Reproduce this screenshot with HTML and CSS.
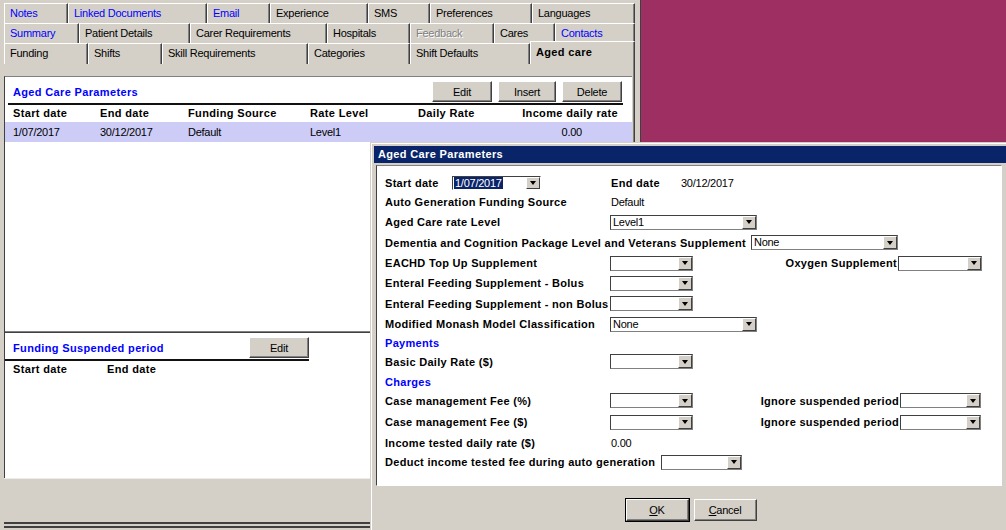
FILE: index.html
```html
<!DOCTYPE html>
<html lang="en">
<head>
    <meta charset="UTF-8">
    <title>Aged Care Parameters</title>
    <link rel="stylesheet" href="styles.css">
</head>
<body>
    <div class="app">
        <div class="tabrow row1">
            <div class="tab blue">Notes</div>
            <div class="tab blue">Linked Documents</div>
            <div class="tab blue">Email</div>
            <div class="tab">Experience</div>
            <div class="tab">SMS</div>
            <div class="tab">Preferences</div>
            <div class="tab">Languages</div>
        </div>
        <div class="tabrow row2">
            <div class="tab blue">Summary</div>
            <div class="tab">Patient Details</div>
            <div class="tab">Carer Requirements</div>
            <div class="tab">Hospitals</div>
            <div class="tab off">Feedback</div>
            <div class="tab">Cares</div>
            <div class="tab blue">Contacts</div>
        </div>
        <div class="tabrow row3">
            <div class="tab">Funding</div>
            <div class="tab">Shifts</div>
            <div class="tab">Skill Requirements</div>
            <div class="tab">Categories</div>
            <div class="tab">Shift Defaults</div>
            <div class="tab active">Aged care</div>
        </div>

        <div class="tabbody">
            <div class="listpanel">
                <div class="section1">
                    <div class="head">
                        <span class="head-title">Aged Care Parameters</span>
                        <div class="btns">
                            <button class="btn">Edit</button>
                            <button class="btn w58">Insert</button>
                            <button class="btn">Delete</button>
                        </div>
                    </div>
                    <div class="cols colhead">
                        <span class="c1">Start date</span>
                        <span class="c2">End date</span>
                        <span class="c3">Funding Source</span>
                        <span class="c4">Rate Level</span>
                        <span class="c5">Daily Rate</span>
                        <span class="c6">Income daily rate</span>
                    </div>
                    <div class="cols datarow">
                        <span class="c1">1/07/2017</span>
                        <span class="c2">30/12/2017</span>
                        <span class="c3">Default</span>
                        <span class="c4">Level1</span>
                        <span class="c5"></span>
                        <span class="c6 amount">0.00</span>
                    </div>
                </div>
                <div class="sep"></div>
                <div class="section2">
                    <div class="head short">
                        <span class="head-title">Funding Suspended period</span>
                        <div class="btns">
                            <button class="btn">Edit</button>
                        </div>
                    </div>
                    <div class="cols colhead">
                        <span class="s1">Start date</span>
                        <span>End date</span>
                    </div>
                </div>
            </div>
            <div class="tabfoot"></div>
            <div class="bottomline"></div>
        </div>
    </div>

    <div class="dialog">
        <div class="dlg-title">Aged Care Parameters</div>
        <div class="dlg-body">
            <div class="drow">
                <span class="lbl w67">Start date</span>
                <span class="combo date"><span class="sel">1/07/2017</span><span class="drop"></span></span>
                <span class="lbl enddate">End date</span>
                <span class="val">30/12/2017</span>
            </div>
            <div class="drow">
                <span class="lbl">Auto Generation Funding Source</span>
                <span class="val">Default</span>
            </div>
            <div class="drow">
                <span class="lbl">Aged Care rate Level</span>
                <span class="combo wide"><span class="text">Level1</span><span class="drop"></span></span>
            </div>
            <div class="drow">
                <span class="lbl free">Dementia and Cognition Package Level and Veterans Supplement</span>
                <span class="combo wide"><span class="text">None</span><span class="drop"></span></span>
            </div>
            <div class="drow">
                <span class="lbl">EACHD Top Up Supplement</span>
                <span class="combo"><span class="text"></span><span class="drop"></span></span>
                <span class="lbl rlbl">Oxygen Supplement</span>
                <span class="combo w84"><span class="text"></span><span class="drop"></span></span>
            </div>
            <div class="drow">
                <span class="lbl">Enteral Feeding Supplement - Bolus</span>
                <span class="combo"><span class="text"></span><span class="drop"></span></span>
            </div>
            <div class="drow">
                <span class="lbl">Enteral Feeding Supplement - non Bolus</span>
                <span class="combo"><span class="text"></span><span class="drop"></span></span>
            </div>
            <div class="drow">
                <span class="lbl">Modified Monash Model Classification</span>
                <span class="combo wide"><span class="text">None</span><span class="drop"></span></span>
            </div>
            <div class="drow">
                <span class="lbl heading">Payments</span>
            </div>
            <div class="drow">
                <span class="lbl">Basic Daily Rate ($)</span>
                <span class="combo"><span class="text"></span><span class="drop"></span></span>
            </div>
            <div class="drow">
                <span class="lbl heading">Charges</span>
            </div>
            <div class="drow">
                <span class="lbl">Case management Fee (%)</span>
                <span class="combo"><span class="text"></span><span class="drop"></span></span>
                <span class="lbl rlbl ign">Ignore suspended period</span>
                <span class="combo w81"><span class="text"></span><span class="drop"></span></span>
            </div>
            <div class="drow">
                <span class="lbl">Case management Fee ($)</span>
                <span class="combo"><span class="text"></span><span class="drop"></span></span>
                <span class="lbl rlbl ign">Ignore suspended period</span>
                <span class="combo w81"><span class="text"></span><span class="drop"></span></span>
            </div>
            <div class="drow">
                <span class="lbl">Income tested daily rate ($)</span>
                <span class="val">0.00</span>
            </div>
            <div class="drow">
                <span class="lbl free gap6">Deduct income tested fee during auto generation</span>
                <span class="combo w81"><span class="text"></span><span class="drop"></span></span>
            </div>
        </div>
        <div class="dlg-foot">
            <button class="btn big default"><u>O</u>K</button>
            <button class="btn big"><u>C</u>ancel</button>
        </div>
    </div>
</body>
</html>
```

FILE: styles.css
```css
body {
    margin: 0;
    width: 1006px;
    height: 530px;
    overflow: hidden;
    position: relative;
    background-color: #9d2f62;
    font-family: "Liberation Sans", Arial, sans-serif;
    font-size: 11px;
    letter-spacing: -0.25px;
    color: #000;
}
.app {
    width: 641px;
    height: 530px;
    box-sizing: border-box;
    padding: 3px 0 0 4px;
    background-color: #d4d0c8;
    border-right: 1px solid #404040;
}

/* tabs */
.tabrow {
    display: grid;
    height: 20px;
    width: 631px;
}
.row1 { grid-template-columns: 64px 139px 63px 98px 62px 102px 103px; }
.row2 { grid-template-columns: 75px 111px 137px 83px 84px 61px 80px; }
.row3 { grid-template-columns: 84px 74px 146px 102px 120px 105px; }
.tab {
    box-sizing: border-box;
    border-top: 1px solid #fff;
    border-left: 1px solid #fff;
    border-right: 1px solid #404040;
    box-shadow: inset -1px 0 #808080;
    padding-left: 5px;
    line-height: 19px;
    white-space: nowrap;
    overflow: hidden;
}
.tab.blue { color: #0000ff; }
.tab.off {
    color: #808080;
    text-shadow: 1px 1px #fff;
}
.tab.active {
    font-weight: bold;
    letter-spacing: 0.35px;
    margin-top: -2px;
    height: 23px;
    line-height: 20px;
    background-color: #d4d0c8;
    position: relative;
    z-index: 1;
}

/* tab page */
.tabbody {
    width: 631px;
    height: 467px;
    box-sizing: border-box;
    border-right: 1px solid #404040;
    box-shadow: inset -1px 0 #808080;
    padding-top: 13px;
    display: flex;
    flex-direction: column;
}
.listpanel {
    height: 402px;
    box-sizing: border-box;
    margin-right: 2px;
    background-color: #fff;
    border-top: 1px solid #808080;
    border-left: 1px solid #404040;
    display: flex;
    flex-direction: column;
}
.section1 { height: 254px; }
.sep {
    border-top: 1px solid #808080;
    border-bottom: 1px solid #404040;
}
.section2 { flex: 1; }
.head {
    display: flex;
    justify-content: space-between;
    align-items: flex-start;
    height: 26px;
    margin: 0 9px 0 3px;
    border-bottom: 2px solid #111;
}
.head.short {
    width: 304px;
    margin: 0;
}
.head-title {
    margin: 8px 0 0 5px;
    line-height: 14px;
    font-weight: bold;
    letter-spacing: 0.35px;
    color: #0000ff;
}
.head.short .head-title { margin-left: 8px; }
.btns {
    display: flex;
    gap: 6px;
    margin: 4px 1px 0 0;
}
.head.short .btns { margin-right: 0; }
.btn {
    width: 60px;
    height: 21px;
    padding: 0;
    box-sizing: border-box;
    font: inherit;
    letter-spacing: -0.25px;
    color: #000;
    background-color: #d4d0c8;
    border: 1px solid;
    border-color: #fff #404040 #404040 #fff;
    box-shadow: inset -1px -1px #808080;
}
.btn.w58 { width: 58px; }
.cols {
    display: flex;
    padding-left: 8px;
    white-space: nowrap;
}
.colhead {
    height: 17px;
    line-height: 17px;
    font-weight: bold;
    letter-spacing: 0.35px;
}
.datarow {
    height: 20px;
    line-height: 20px;
    background-color: #ccccf7;
}
.c1 { width: 87px; }
.c2 { width: 88px; }
.c3 { width: 122px; }
.c4 { width: 108px; }
.c5 { width: 100px; }
.c6 { width: 100px; text-align: right; }
.c6.amount { width: 64px; }
.s1 { width: 94px; }
.tabfoot {
    flex: 1;
    border-top: 1px solid #ececec;
}
.bottomline {
    height: 2px;
    margin-bottom: 2px;
    border-top: 2px solid #404040;
    border-bottom: 2px solid #404040;
    background-color: #d4d0c8;
}

/* dialog */
.dialog {
    position: absolute;
    left: 370px;
    top: 142px;
    width: 641px;
    height: 400px;
    box-sizing: border-box;
    padding: 3px;
    background-color: #d4d0c8;
    border-top: 1px solid #d4d0c8;
    border-left: 1px solid #d4d0c8;
    box-shadow: inset 1px 1px #fff;
    display: flex;
    flex-direction: column;
}
.dlg-title {
    height: 17px;
    line-height: 17px;
    padding-left: 4px;
    background-color: #0a246a;
    color: #fff;
    font-weight: bold;
    letter-spacing: 0.35px;
}
.dlg-body {
    height: 321px;
    box-sizing: border-box;
    margin: 2px 6px 0 2px;
    padding: 7px 0 0 8px;
    background-color: #fff;
    border: 1px solid;
    border-color: #808080 #fff #fff #404040;
    display: grid;
    grid-template-rows: 19px 20px 20px 21px 20px 20px 21px 20px 17px 21px 19px 19px 24px 18px 20px;
    align-content: start;
}
.drow {
    display: flex;
    align-items: center;
    white-space: nowrap;
}
.lbl {
    width: 225px;
    flex: none;
    font-weight: bold;
    letter-spacing: 0.3px;
}
.lbl.w67 { width: 67px; }
.lbl.free { width: auto; margin-right: 5px; }
.lbl.gap6 { margin-right: 6px; }
.lbl.enddate { width: 69px; margin-left: 70px; }
.lbl.rlbl {
    width: 204px;
    text-align: right;
    padding-right: 1px;
}
.lbl.ign { width: 206px; }
.heading { color: #0000ff; }
.val { padding-left: 1px; }
.combo {
    width: 83px;
    height: 15px;
    flex: none;
    box-sizing: border-box;
    display: flex;
    background-color: #fff;
    border: 1px solid;
    border-color: #404040 #808080 #808080 #404040;
}
.combo.wide { width: 147px; }
.combo.w84 { width: 84px; }
.combo.w81 { width: 81px; }
.combo.date {
    width: 89px;
    height: 14px;
    border-color: #404040 #fff #fff #404040;
}
.combo .text {
    padding-left: 2px;
    line-height: 13px;
}
.sel {
    margin: 0 0 0 1px;
    padding: 0 1px;
    line-height: 12px;
    background-color: #0a246a;
    color: #fff;
}
.drop {
    width: 14px;
    margin-left: auto;
    box-sizing: border-box;
    background-color: #d4d0c8;
    border: 1px solid;
    border-color: #fff #404040 #404040 #fff;
    display: flex;
    align-items: center;
    justify-content: center;
}
.drop::after {
    content: "";
    border-left: 3px solid transparent;
    border-right: 3px solid transparent;
    border-top: 4px solid #000;
}
.dlg-foot {
    display: flex;
    justify-content: center;
    gap: 5px;
    padding-top: 13px;
}
.btn.big {
    width: 63px;
    height: 22px;
}
.btn.default {
    outline: 1px solid #000;
}
```
